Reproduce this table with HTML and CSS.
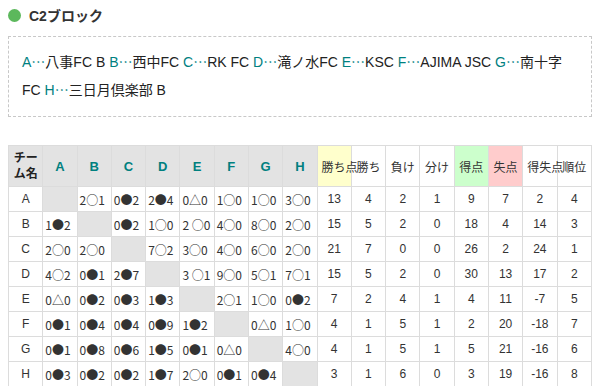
FILE: index.html
```html
<!DOCTYPE html>
<html lang="ja">
<head>
<meta charset="utf-8">
<link rel="stylesheet" href="styles.css">
</head>
<body>
<div class="page">
  <h2 class="title"><span class="dot"></span>C2ブロック</h2>
  <div class="legend">
    <span class="k">A<i>…</i></span>八事FC B <span class="k">B<i>…</i></span>西中FC <span class="k">C<i>…</i></span>RK FC <span class="k">D<i>…</i></span>滝ノ水FC <span class="k">E<i>…</i></span>KSC <span class="k">F<i>…</i></span>AJIMA JSC <span class="k">G<i>…</i></span>南十字FC <span class="k">H<i>…</i></span>三日月倶楽部 B
  </div>
  <table class="league">
    <thead>
      <tr>
        <th class="hd name">チーム名</th>
        <th class="hd tm">A</th><th class="hd tm">B</th><th class="hd tm">C</th><th class="hd tm">D</th>
        <th class="hd tm">E</th><th class="hd tm">F</th><th class="hd tm">G</th><th class="hd tm">H</th>
        <th class="st pts">勝ち点</th><th class="st">勝ち</th><th class="st">負け</th><th class="st">分け</th>
        <th class="st gf">得点</th><th class="st ga">失点</th><th class="st">得失点</th><th class="st">順位</th>
      </tr>
    </thead>
    <tbody>
      <tr>
        <td class="nm">A</td>
        <td class="x"></td><td class="r">2○1</td><td class="r">0●2</td><td class="r">2●4</td><td class="r">0△0</td><td class="r">1○0</td><td class="r">1○0</td><td class="r">3○0</td>
        <td>13</td><td>4</td><td>2</td><td>1</td><td>9</td><td>7</td><td>2</td><td>4</td>
      </tr>
      <tr>
        <td class="nm">B</td>
        <td class="r">1●2</td><td class="x"></td><td class="r">0●2</td><td class="r">1○0</td><td class="r">2 ○0</td><td class="r">4○0</td><td class="r">8○0</td><td class="r">2○0</td>
        <td>15</td><td>5</td><td>2</td><td>0</td><td>18</td><td>4</td><td>14</td><td>3</td>
      </tr>
      <tr>
        <td class="nm">C</td>
        <td class="r">2○0</td><td class="r">2○0</td><td class="x"></td><td class="r">7○2</td><td class="r">3○0</td><td class="r">4○0</td><td class="r">6○0</td><td class="r">2○0</td>
        <td>21</td><td>7</td><td>0</td><td>0</td><td>26</td><td>2</td><td>24</td><td>1</td>
      </tr>
      <tr>
        <td class="nm">D</td>
        <td class="r">4○2</td><td class="r">0●1</td><td class="r">2●7</td><td class="x"></td><td class="r">3 ○1</td><td class="r">9○0</td><td class="r">5○1</td><td class="r">7○1</td>
        <td>15</td><td>5</td><td>2</td><td>0</td><td>30</td><td>13</td><td>17</td><td>2</td>
      </tr>
      <tr>
        <td class="nm">E</td>
        <td class="r">0△0</td><td class="r">0●2</td><td class="r">0●3</td><td class="r">1●3</td><td class="x"></td><td class="r">2○1</td><td class="r">1○0</td><td class="r">0●2</td>
        <td>7</td><td>2</td><td>4</td><td>1</td><td>4</td><td>11</td><td>-7</td><td>5</td>
      </tr>
      <tr>
        <td class="nm">F</td>
        <td class="r">0●1</td><td class="r">0●4</td><td class="r">0●4</td><td class="r">0●9</td><td class="r">1●2</td><td class="x"></td><td class="r">0△0</td><td class="r">1○0</td>
        <td>4</td><td>1</td><td>5</td><td>1</td><td>2</td><td>20</td><td>-18</td><td>7</td>
      </tr>
      <tr>
        <td class="nm">G</td>
        <td class="r">0●1</td><td class="r">0●8</td><td class="r">0●6</td><td class="r">1●5</td><td class="r">0●1</td><td class="r">0△0</td><td class="x"></td><td class="r">4○0</td>
        <td>4</td><td>1</td><td>5</td><td>1</td><td>5</td><td>21</td><td>-16</td><td>6</td>
      </tr>
      <tr>
        <td class="nm">H</td>
        <td class="r">0●3</td><td class="r">0●2</td><td class="r">0●2</td><td class="r">1●7</td><td class="r">2○0</td><td class="r">0●1</td><td class="r">0●4</td><td class="x"></td>
        <td>3</td><td>1</td><td>6</td><td>0</td><td>3</td><td>19</td><td>-16</td><td>8</td>
      </tr>
    </tbody>
  </table>
</div>
</body>
</html>
```

FILE: styles.css
```css
html, body {
  margin: 0;
  padding: 0;
  background: #fff;
}
body {
  font-family: "Liberation Sans", "Noto Sans CJK JP", sans-serif;
  color: #222;
}
.page {
  padding: 0 8px;
}
.title {
  display: flex;
  align-items: center;
  gap: 8px;
  height: 30px;
  margin: 0 0 6px;
  font-size: 14px;
  font-weight: bold;
  color: #333;
}
.dot {
  width: 13px;
  height: 13px;
  border-radius: 50%;
  background: #5cb85c;
}
.legend {
  border: 1px dashed #c8c8c8;
  padding: 11px 13px 12px;
  font-size: 14px;
  line-height: 27px;
  color: #222;
}
.k {
  color: #00807f;
}
.k i {
  font-style: normal;
  font-family: "Noto Sans CJK JP", sans-serif;
}
.league {
  width: 100%;
  margin-top: 28px;
  border-collapse: collapse;
  table-layout: fixed;
  font-size: 12px;
  color: #333;
}
.league th,
.league td {
  border: 1px solid #dcdcdc;
  padding: 0;
  text-align: center;
}
.league th {
  height: 40px;
  font-weight: normal;
}
.league td {
  height: 24px;
}
.hd {
  background: #e3e3e3;
}
.league th.name {
  font-weight: bold;
  font-size: 12px;
  line-height: 16px;
  color: #222;
  padding: 0 4px;
}
.league th.tm {
  color: #00807f;
  font-weight: bold;
  font-size: 13px;
}
.league th.st {
  white-space: nowrap;
  font-size: 12px;
  padding: 0 4px;
}
.pts {
  background: #ffffcc;
}
.gf {
  background: #ccffcc;
}
.ga {
  background: #ffcccc;
}
.league td.r {
  text-align: left;
  padding-left: 2px;
  white-space: nowrap;
  font-family: "Noto Sans CJK JP", sans-serif;
}
.x {
  background: #e3e3e3;
}
```
